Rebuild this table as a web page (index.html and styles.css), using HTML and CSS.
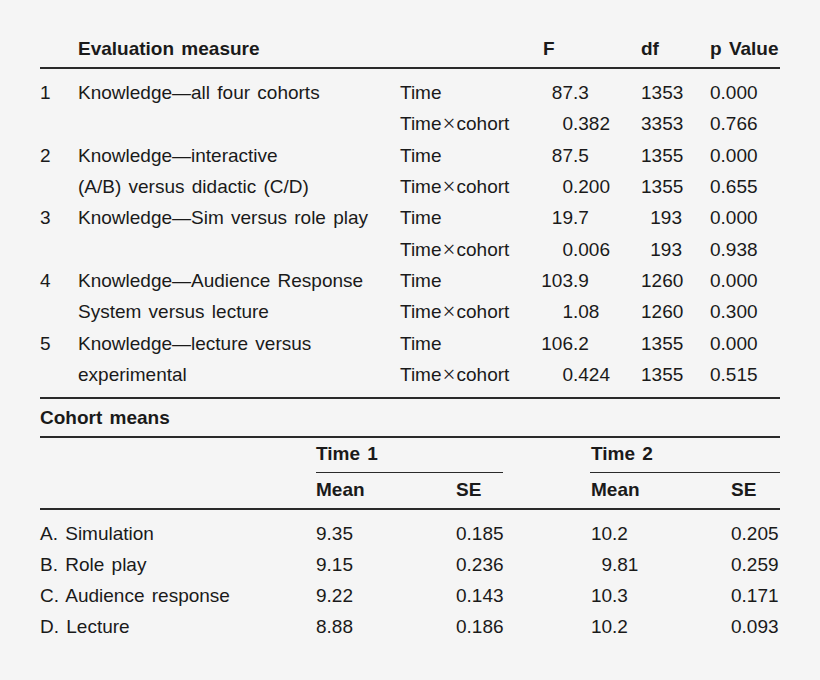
FILE: index.html
```html
<!DOCTYPE html>
<html lang="en">
<head>
<meta charset="utf-8">
<title>Evaluation measures</title>
<link rel="stylesheet" href="styles.css">
</head>
<body>
<main class="page">
  <section class="anova">
    <div class="agrid ahead">
      <span></span>
      <span class="hd">Evaluation measure</span>
      <span></span>
      <span class="hd">F</span>
      <span class="hd">df</span>
      <span class="hd">p Value</span>
    </div>
    <div class="agrid abody">
      <span class="num">1</span>
      <span class="measure">Knowledge—all four cohorts</span>
      <span>Time</span><span class="f"><span class="int">87</span>.3</span><span class="df">1353</span><span>0.000</span>
      <span>Time<span class="x">×</span>cohort</span><span class="f"><span class="int">0</span>.382</span><span class="df">3353</span><span>0.766</span>

      <span class="num">2</span>
      <span class="measure">Knowledge—interactive<br>(A/B) versus didactic (C/D)</span>
      <span>Time</span><span class="f"><span class="int">87</span>.5</span><span class="df">1355</span><span>0.000</span>
      <span>Time<span class="x">×</span>cohort</span><span class="f"><span class="int">0</span>.200</span><span class="df">1355</span><span>0.655</span>

      <span class="num">3</span>
      <span class="measure">Knowledge—Sim versus role play</span>
      <span>Time</span><span class="f"><span class="int">19</span>.7</span><span class="df">193</span><span>0.000</span>
      <span>Time<span class="x">×</span>cohort</span><span class="f"><span class="int">0</span>.006</span><span class="df">193</span><span>0.938</span>

      <span class="num">4</span>
      <span class="measure">Knowledge—Audience Response<br>System versus lecture</span>
      <span>Time</span><span class="f"><span class="int">103</span>.9</span><span class="df">1260</span><span>0.000</span>
      <span>Time<span class="x">×</span>cohort</span><span class="f"><span class="int">1</span>.08</span><span class="df">1260</span><span>0.300</span>

      <span class="num">5</span>
      <span class="measure">Knowledge—lecture versus<br>experimental</span>
      <span>Time</span><span class="f"><span class="int">106</span>.2</span><span class="df">1355</span><span>0.000</span>
      <span>Time<span class="x">×</span>cohort</span><span class="f"><span class="int">0</span>.424</span><span class="df">1355</span><span>0.515</span>
    </div>
  </section>

  <section class="cohort">
    <h2 class="ctitle">Cohort means</h2>
    <div class="cgrid chead">
      <span></span>
      <span class="hd time t1">Time 1</span>
      <span></span>
      <span class="hd time t2">Time 2</span>
      <span></span>
      <span class="hd sub">Mean</span>
      <span class="hd sub">SE</span>
      <span></span>
      <span class="hd sub">Mean</span>
      <span class="hd sub">SE</span>
    </div>
    <div class="cgrid cbody">
      <span>A. Simulation</span><span>9.35</span><span>0.185</span><span></span><span class="m2"><span class="int">10</span>.2</span><span>0.205</span>
      <span>B. Role play</span><span>9.15</span><span>0.236</span><span></span><span class="m2"><span class="int">9</span>.81</span><span>0.259</span>
      <span>C. Audience response</span><span>9.22</span><span>0.143</span><span></span><span class="m2"><span class="int">10</span>.3</span><span>0.171</span>
      <span>D. Lecture</span><span>8.88</span><span>0.186</span><span></span><span class="m2"><span class="int">10</span>.2</span><span>0.093</span>
    </div>
  </section>
</main>
</body>
</html>
```

FILE: styles.css
```css
html, body {
  margin: 0;
  padding: 0;
  background: #f5f5f5;
}

body {
  font-family: "Liberation Sans", Arial, sans-serif;
  font-size: 19px;
  word-spacing: 2px;
  color: #1a1a1a;
  white-space: nowrap;
}

.page {
  width: 740px;
  padding: 28px 40px 0 40px;
}

.hd {
  font-weight: bold;
  font-size: 19px;
}

.x {
  font-family: "Liberation Serif", "Times New Roman", serif;
  font-size: 23px;
  line-height: 1;
  vertical-align: -1px;
  margin: 0 1px 0 1px;
}

/* ---- top table ---- */
.agrid {
  display: grid;
  grid-template-columns: 38px 322px 141px 100px 41px 1fr;
}

.ahead {
  height: 41px;
  line-height: 37px;
  padding-top: 2px;
  box-sizing: border-box;
  border-bottom: 2px solid #2a2a2a;
}

.ahead .hd:nth-child(4) {
  padding-left: 2px;
}

.ahead .hd:last-child {
  padding-left: 28px;
}

.abody {
  grid-auto-rows: 31.33px;
  line-height: 31.33px;
  padding: 8px 0 7px;
}

.num,
.measure {
  grid-row: span 2;
}

.df {
  text-align: right;
}

.abody .df + span {
  padding-left: 28px;
}

.int {
  display: inline-block;
  text-align: right;
}

.f .int {
  width: 32px;
}

.m2 .int {
  width: 21px;
}

/* ---- cohort means ---- */
.cohort {
  border-top: 2px solid #2a2a2a;
}

.ctitle {
  margin: 0;
  font-size: 19px;
  font-weight: bold;
  height: 37px;
  line-height: 37px;
  border-bottom: 2px solid #2a2a2a;
}

.cgrid {
  display: grid;
  grid-template-columns: 276px 140px 47px 88px 140px 1fr;
}

.chead {
  border-bottom: 2px solid #2a2a2a;
}

.time {
  grid-column: span 2;
  height: 35px;
  line-height: 31px;
  box-sizing: border-box;
  border-bottom: 1px solid #2a2a2a;
}

.t2 {
  margin-left: -1px;
  padding-left: 1px;
}

.sub {
  height: 35px;
  line-height: 33px;
}

.cbody {
  grid-auto-rows: 31px;
  line-height: 31px;
  padding-top: 8px;
}
```
